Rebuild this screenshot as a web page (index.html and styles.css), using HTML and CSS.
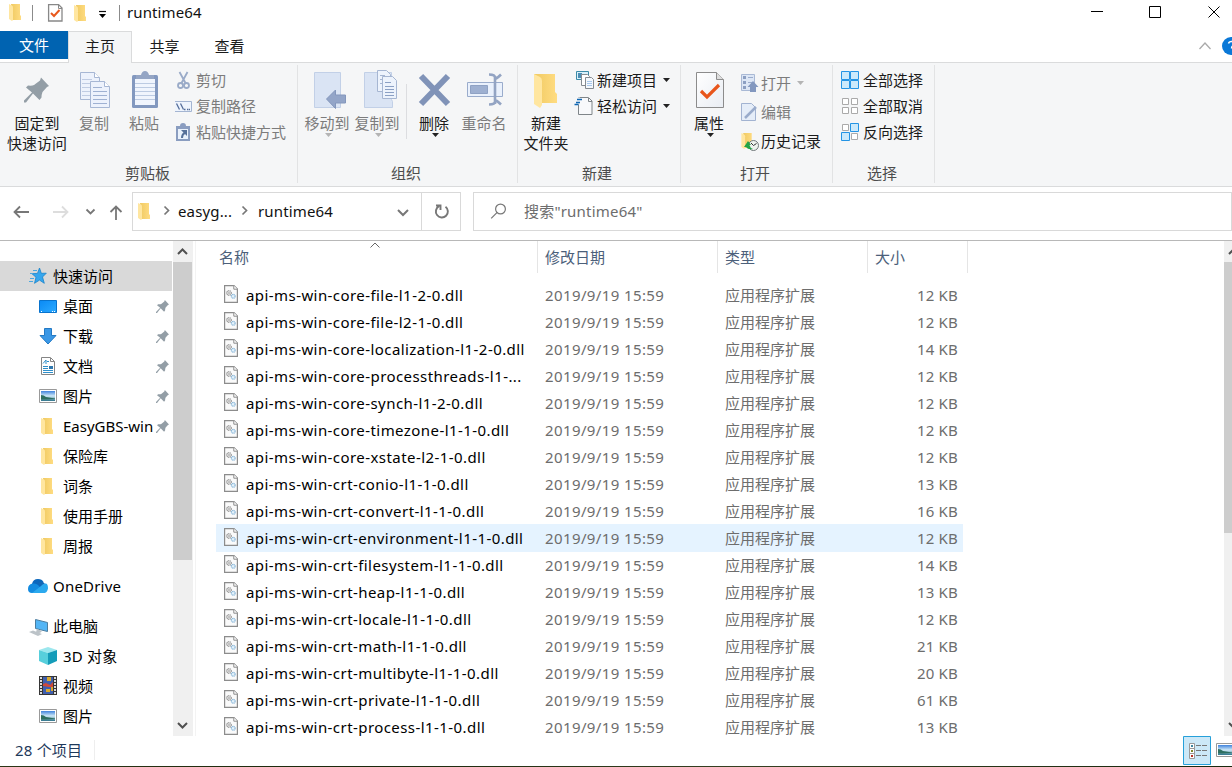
FILE: index.html
```html
<!DOCTYPE html>
<html lang="zh-CN">
<head>
<meta charset="utf-8">
<title>runtime64</title>
<link rel="stylesheet" href="styles.css">
</head>
<body>
<svg class="defs" width="0" height="0">
  <defs>
    <linearGradient id="gold" x1="0" x2="1"><stop offset="0" stop-color="#f0ca62"/><stop offset="1" stop-color="#ffdc82"/></linearGradient>
    <linearGradient id="pale" x1="0" x2="1" y2="1"><stop offset="0" stop-color="#fff"/><stop offset="1" stop-color="#e9edf3"/></linearGradient>
    <linearGradient id="sky" y2="1" x2="0"><stop offset="0" stop-color="#3f83dd"/><stop offset=".5" stop-color="#cfe9f7"/><stop offset="1" stop-color="#2b7289"/></linearGradient>
    <linearGradient id="desk" x2="1" y2="1"><stop offset="0" stop-color="#0a8af5"/><stop offset="1" stop-color="#2caaff"/></linearGradient>
  </defs>
  <symbol id="folder" viewBox="0 0 12 17"><path fill="url(#gold)" d="M2 0h9v11l1 1v4H3z"/><path fill="#ffe6a0" d="M0 0l3 1.500q1 .5 1 2V16l-1 1-3-2z"/></symbol>
  <symbol id="pin" viewBox="0 0 25 25"><path fill="#939ea6" d="M17 0L25 8.500 23 9.500 18.500 14.500Q17.500 17 17.500 20L15.500 22.500 9 16 2 25H0V23L8 15 2 10 4 8Q8 8.500 10 7.500L16 3z"/></symbol>
  <symbol id="dll" viewBox="0 0 14 18"><path fill="#fafafa" stroke="#8c8c8c" stroke-width="1.200" d="M.6.6h9.400l3.400 3.400v13.400H.6z"/><path fill="#fff" stroke="#8c8c8c" d="M9.800.6v3.600h3.600"/><circle cx="5" cy="8" r="2.300" fill="#e4e4e4" stroke="#999" stroke-width="1.200" stroke-dasharray="1 .5"/><circle cx="5" cy="8" r=".7" fill="#888"/><circle cx="9.200" cy="11.300" r="1.900" fill="#e4f2fb" stroke="#8ab6d8" stroke-width="1.200" stroke-dasharray="1 .4"/></symbol>
  <symbol id="photo" viewBox="0 0 18 14"><path fill="#fff" stroke="#999" d="M.5.5h17v13H.5z"/><path fill="url(#sky)" d="M2 2h14v10H2z"/><path fill="#2e6f61" d="M2 6q3 0 5 2l9 1.500V10l-9 .5H2z"/></symbol>
  <symbol id="caret" viewBox="0 0 7 4"><path d="M0 0h7L3.500 4z"/></symbol>
</svg>

<div class="window">
  <header class="titlebar">
    <svg class="quick" width="124" height="31" viewBox="0 0 124 31">
      <use href="#folder" x="9" y="4" width="12" height="17"/>
      <path stroke="#8b8b8b" d="M32.500 5v16M119.500 5v16"/>
      <path fill="#fff" stroke="#888" stroke-width="1.300" d="M48.600 4.600h10l3.400 3.400v13H48.600z"/><path fill="none" stroke="#888" d="M58.500 5v3.500H62"/><path fill="none" stroke="#e8581c" stroke-width="2" d="M51 13l3 3 5.500-6"/>
      <use href="#folder" x="74" y="5" width="12" height="17"/>
      <path stroke="#111" stroke-width="1.200" d="M99 11.500h7"/><path d="M99 14h7l-3.500 4z"/>
    </svg>
    <span class="caption">runtime64</span>
    <svg class="controls" width="140" height="31" viewBox="1092 0 140 31"><g fill="none" stroke="#000"><path d="M1091 11.500h12M1149.500 6.500h11v11h-11zM1208.500 6.500l11 11M1219.500 6.500l-11 11"/></g></svg>
  </header>

  <nav class="tabs">
    <span class="tab file">文件</span><span class="tab active">主页</span><span class="tab">共享</span><span class="tab">查看</span>
    <svg class="help" width="40" height="31" viewBox="1192 31 40 31"><path fill="none" stroke="#aaa" stroke-width="1.300" d="M1199.500 49l5.500-6 5.500 6"/><circle cx="1231" cy="46" r="9" fill="#0a78d7"/><path d="M1228.500 43.500q.5-2 3-2t3 2-2 2.500q-1 1-1 2.500" fill="none" stroke="#fff" stroke-width="1.500"/></svg>
  </nav>

  <section class="ribbon">
    <div class="group clipboard">
      <div class="tools">
        <div class="big pinbtn"><svg width="64" height="48" viewBox="5 65 64 48"><use href="#pin" x="24" y="77" width="25" height="26"/></svg>固定到<br>快速访问</div>
        <div class="big off"><svg width="50" height="48" viewBox="69 65 50 48"><g fill="#edf2fc" stroke="#a7b7d4"><path d="M80.500 72.500h14l5 5v22h-19z"/><path d="M94.500 72.500v5h5" fill="#fff"/><path stroke="#c0cce3" d="M82 79.500h10M82 83.500h8M82 87.500h8M82 91.500h8M82 95.500h8"/><path d="M90.500 81.500h14l5 5v21h-19z"/><path d="M104.500 81.500v5h5" fill="#fff"/><path stroke="#9fb1d2" d="M93 87.500h9M93 91.500h14M93 95.500h14M93 99.500h14M93 103.500h14"/></g></svg>复制</div>
        <div class="big off"><svg width="50" height="48" viewBox="119 65 50 48"><rect x="132" y="75" width="26" height="33" rx="1.500" fill="#8298bf"/><path fill="#f0f5fd" d="M135 79h20v26h-20z"/><path stroke="#bccbe2" d="M135 83.500h20M135 87.500h20M135 91.500h20M135 95.500h20M135 99.500h20"/><path fill="#94a5c4" d="M136 75h5q1-4 4-4t4 4h5v4h-18z"/></svg>粘贴</div>
        <div class="stack">
          <div class="small off"><svg width="21" height="20" viewBox="175 70 21 20"><g fill="none" stroke="#9aabc8" stroke-width="1.800"><path d="M179.500 72l6 11M187.500 72l-6 11"/><circle cx="180.500" cy="85.500" r="2.500"/><circle cx="186.500" cy="85.500" r="2.500"/></g></svg>剪切</div>
          <div class="small off"><svg width="21" height="20" viewBox="175 96 21 20"><path fill="#eef4fd" stroke="#a4b5d2" d="M174.500 101.500h17v10h-17z"/><path stroke="#536c99" stroke-width="1.300" d="M176.500 103.500l3 6M180.500 103.500l3 6M184 109.500h1.500M187 109.500h1.500M189 109.500h1"/></svg>复制路径</div>
          <div class="small off"><svg width="21" height="20" viewBox="175 122 21 20"><path fill="#8a9dc0" d="M176 126h4q0-3 3-3t3 3h4v15h-14z"/><path fill="#eaf2fc" d="M178 129h10v10h-10z"/><path fill="#577199" d="M181 130h6v6l-2-2q-2 1-2 4h-2q0-4 2.500-5.500z"/></svg>粘贴快捷方式</div>
        </div>
      </div>
      <div class="group-name">剪贴板</div>
    </div>

    <div class="group organize">
      <div class="tools">
        <div class="big off"><svg width="50" height="48" viewBox="302 65 50 48"><path fill="#dae4f4" stroke="#c2d0e7" d="M314.500 72.500h26v35h-26z"/><path fill="#93a5c8" stroke="#8497bc" d="M326.500 99l9-9v5h10v8h-10v5.500z"/></svg>移动到<svg class="arrow"><use href="#caret"/></svg></div>
        <div class="big off"><svg width="50" height="48" viewBox="352 65 50 48"><path fill="#dae4f4" stroke="#c2d0e7" d="M364.500 72.500h27v27l1 2v6h-28z"/><g fill="#edf3fc" stroke="#a6b6d2"><path d="M377.500 70.500h9l4 4v17h-13z"/><path d="M380 75.500h5M380 79.500h5M380 83.500h5"/><path d="M382.500 76.500h10l4 4v18h-14z"/><path stroke="#8ba0c4" d="M385 82.500h6M385 86.500h9M385 89.500h9M385 92.500h9M385 95.500h9"/></g></svg>复制到<svg class="arrow"><use href="#caret"/></svg></div>
        <i class="divider"></i>
        <div class="big"><svg width="50" height="48" viewBox="409 65 50 48"><path stroke="#8093b8" stroke-width="6" d="M421 76l27 28M448 76l-27 28"/></svg>删除<svg class="arrow"><use href="#caret"/></svg></div>
        <div class="big off"><svg width="50" height="48" viewBox="459 65 50 48"><path fill="#eaf1fc" stroke="#9aaccc" d="M467.500 82.500h35v14h-35z"/><path fill="#9eb0d1" stroke="#8fa2c4" d="M470.500 85.500h17v8h-17z"/><path fill="none" stroke="#93a4c3" stroke-width="2.600" d="M489 74.500q6 0 6 3t6-3M495 76v28M489 104.500q6 0 6-3t6 3"/></svg>重命名</div>
      </div>
      <div class="group-name">组织</div>
    </div>

    <div class="group new">
      <div class="tools">
        <div class="big"><svg width="50" height="48" viewBox="521 65 50 48"><path fill="url(#gold)" d="M534 74h21v18l2 2v9h-18z"/><path fill="#ffe6a0" d="M534 74l6 3q2 1 2 4v24l-2 3-6-4z"/></svg>新建<br>文件夹</div>
        <div class="stack">
          <div class="small"><svg width="21" height="20" viewBox="576 70 21 20"><path fill="#d9f0fa" stroke="#3c8ba8" d="M576.500 71.500h12v8h-12z"/><path fill="#4b8db5" d="M578 73h4v5h-4z"/><path fill="#fff" stroke="#858b91" d="M581.500 74.500h6l2 2v9h-8z"/><path fill="#f4f8fd" stroke="#858b91" d="M585.500 77.500h6l2 2v9h-8z"/><path stroke="#a8c8ec" d="M587 81.500h5M587 83.500h5M587 85.500h5"/></svg>新建项目<svg class="arrow side"><use href="#caret"/></svg></div>
          <div class="small"><svg class="bleed" width="21" height="20" viewBox="576 96 21 20"><path fill="#f8f9fb" stroke="#7f8589" d="M578.500 97.500h10l3.500 3.500v13.500h-13.500z"/><path fill="none" stroke="#7f8589" d="M588.500 98v3.500h3.500"/><path stroke="#f5f6f7" stroke-width="7" d="M576 101h4"/><path stroke="#1268b3" stroke-width="1.300" d="M577 99.500h5M576 102.500h4M574.500 104.500h4"/></svg>轻松访问<svg class="arrow side"><use href="#caret"/></svg></div>
        </div>
      </div>
      <div class="group-name">新建</div>
    </div>

    <div class="group open">
      <div class="tools">
        <div class="big"><svg width="50" height="48" viewBox="684 65 50 48"><path fill="url(#pale)" stroke="#8c8c8c" d="M696.500 72.500h20l7 7v28h-27z"/><path fill="#ddd" stroke="#8c8c8c" d="M716.500 72.500v7h7"/><path fill="none" stroke="#e8561c" stroke-width="3.200" d="M701 91l6 6 12-12"/></svg>属性<svg class="arrow"><use href="#caret"/></svg></div>
        <div class="stack loose">
          <div class="small off"><svg width="20" height="20" viewBox="741 73 20 20"><path fill="#dce6f5" stroke="#a9b9d5" d="M741.500 74.500h13v16h-13z"/><path fill="#8c9fc2" d="M743 76h3v3h-3zm0 5h3v3h-3zm0 5h3v3h-3z"/><path stroke="#9baccc" d="M748 77.500h5M748 82.500h4"/><path fill="#8398bf" d="M753 81l5.500 6H756v5h-6v-5h-2.500z"/></svg>打开<svg class="arrow side"><use href="#caret"/></svg></div>
          <div class="small off"><svg width="20" height="20" viewBox="741 102 20 20"><path fill="#e5edf8" stroke="#a2b3d1" d="M741.500 103.500h10l4 4v13h-14z"/><path stroke="#9aaccb" stroke-width="2.500" d="M745 118l11-11"/></svg>编辑</div>
          <div class="small"><svg width="20" height="20" viewBox="741 131 20 20"><use href="#folder" x="741" y="133" width="12" height="16"/><circle cx="753.500" cy="145.500" r="5" fill="#eef2ee" stroke="#70787a"/><path fill="#22a447" d="M744 147l4-6 3 4h-1.500q.5 3 3.500 4-5 1-7-2z"/><path fill="none" stroke="#333" d="M751 143l2.500 2.500 3-2"/></svg>历史记录</div>
        </div>
      </div>
      <div class="group-name">打开</div>
    </div>

    <div class="group select">
      <div class="tools"><div class="stack">
        <div class="small"><svg width="22" height="20" viewBox="841 70 22 20"><path fill="#cbe9fb" stroke="#2494e5" d="M841.500 71.500h8v8h-8zm9 0h8v8h-8zm-9 9h8v8h-8zm9 0h8v8h-8z"/></svg>全部选择</div>
        <div class="small"><svg width="22" height="20" viewBox="841 96 22 20"><path fill="#fff" stroke="#aaa" d="M842.500 98.500h6v6h-6zm9 0h6v6h-6zm-9 9h6v6h-6zm9 0h6v6h-6z"/></svg>全部取消</div>
        <div class="small"><svg width="22" height="20" viewBox="841 122 22 20"><path fill="#fff" stroke="#aaa" d="M842.500 124.500h6v6h-6zm9 9h6v6h-6z"/><path fill="#cbe9fb" stroke="#2494e5" d="M850.500 123.500h8v8h-8zm-9 9h8v8h-8z"/></svg>反向选择</div>
      </div></div>
      <div class="group-name">选择</div>
    </div>
  </section>

  <section class="address">
    <svg class="history" width="132" height="53" viewBox="0 187 132 53"><g fill="none" stroke="#777" stroke-width="1.800"><path d="M14.500 212H29M20 206.500l-5.500 5.500 5.500 5.500"/><path stroke="#ddd" d="M53 212h14.500M62 206.500l5.500 5.500-5.500 5.500"/><path d="M86.500 209.500l4 4 4-4"/><path d="M116 220v-13M110.500 212l5.500-5.500 5.500 5.500"/></g></svg>
    <div class="path">
      <svg width="45" height="37" viewBox="133 193 45 37"><use href="#folder" x="138" y="203" width="12" height="17"/><path fill="none" stroke="#777" stroke-width="1.700" d="M164.500 206.500l4 4-4 4"/></svg>
      <span class="crumb">easyg...</span>
      <svg width="20" height="37" viewBox="238 193 20 37"><path fill="none" stroke="#777" stroke-width="1.700" d="M242.500 206.500l4 4-4 4"/></svg>
      <span class="crumb last">runtime64</span>
      <svg width="30" height="37" viewBox="391 193 30 37"><path fill="none" stroke="#777" stroke-width="2" d="M398 210l5 5 5-5"/></svg>
    </div>
    <div class="refresh"><svg width="38" height="37" viewBox="422 193 38 37"><path fill="none" stroke="#777" stroke-width="1.900" d="M445.500 206.700a6 6 0 1 1-6.500-.5M436 205.500h4.500v4.500"/></svg></div>
    <div class="search"><svg width="50" height="37" viewBox="474 193 50 37"><g fill="none" stroke="#777" stroke-width="1.200"><circle cx="500.500" cy="209" r="4.900"/><path d="M497.200 212.300l-6 6"/></g></svg><span>搜索"runtime64"</span></div>
  </section>

  <main class="content">
    <aside class="tree">
      <div class="node root current"><svg width="25" height="30" viewBox="29 261 25 30"><path fill="#35a6ee" stroke="#1683ca" stroke-width=".8" d="M40.500 268l1.800 5.300 5-.1-3.800 3.800 1.800 6.300-4.800-3.200-5 3.200 1.500-6-4-3.600 5.500-.3z"/><path stroke="#4aa7df" d="M34 270.500h4M31 273.500h3M31 278.500h4M30 281.500h4"/></svg>快速访问</div>
      <div class="node"><svg width="25" height="30" viewBox="38 291 25 30"><path fill="url(#desk)" stroke="#0873cd" d="M39.500 300.500h17v12h-17z"/><path stroke="#fff" d="M41 311.500h1M52 311.500h1M54 311.500h1"/></svg><span>桌面</span><svg class="pin"><use href="#pin"/></svg></div>
      <div class="node"><svg width="25" height="30" viewBox="38 321 25 30"><path fill="#3b98e6" stroke="#2379c4" d="M44.500 328.500h7v7h4.500l-8 8.500-8-8.500h4.500z"/></svg><span>下载</span><svg class="pin"><use href="#pin"/></svg></div>
      <div class="node"><svg width="25" height="30" viewBox="38 351 25 30"><path fill="#fff" stroke="#858585" d="M41.500 357.500h9l4 4v13h-13z"/><path fill="none" stroke="#858585" d="M50.500 358v3.500h4"/><path fill="none" stroke="#2f8fca" d="M43 363.500l3-3.500v4M47 361.500h2M43 366.500h5M43 368.500h5M43 370.500h10M43 372.500h10"/><path fill="#2f78af" d="M49 366h4v3h-4z"/></svg><span>文档</span><svg class="pin"><use href="#pin"/></svg></div>
      <div class="node"><svg width="25" height="30" viewBox="38 381 25 30"><use href="#photo" x="39" y="389" width="18" height="14"/></svg><span>图片</span><svg class="pin"><use href="#pin"/></svg></div>
      <div class="node"><svg width="25" height="30" viewBox="38 411 25 30"><use href="#folder" x="41" y="418" width="12" height="17"/></svg><span class="latin">EasyGBS-win</span><svg class="pin"><use href="#pin"/></svg></div>
      <div class="node"><svg width="25" height="30" viewBox="38 411 25 30"><use href="#folder" x="41" y="418" width="12" height="17"/></svg><span>保险库</span></div>
      <div class="node"><svg width="25" height="30" viewBox="38 411 25 30"><use href="#folder" x="41" y="418" width="12" height="17"/></svg><span>词条</span></div>
      <div class="node"><svg width="25" height="30" viewBox="38 411 25 30"><use href="#folder" x="41" y="418" width="12" height="17"/></svg><span>使用手册</span></div>
      <div class="node"><svg width="25" height="30" viewBox="38 411 25 30"><use href="#folder" x="41" y="418" width="12" height="17"/></svg><span>周报</span></div>
      <div class="node root spaced"><svg width="25" height="30" viewBox="28 571 25 30"><path fill="#0b67bd" d="M32 584q1-5 6-5 4 0 5.500 3l-3 6z"/><path fill="#138be0" d="M32 593q-4 0-4-4 0-5 5-5.500 3-.5 5 1.500l7 8z"/><path fill="#1467b5" d="M38 583q4-3 7 1l-2 4z"/><path fill="#2ba9ee" d="M32 593l9-7q2-3 5-2.500 2 .5 2 5-1 4.500-4 4.500z"/></svg><span class="wide">OneDrive</span></div>
      <div class="node root spaced"><svg width="25" height="30" viewBox="28 611 25 30"><path fill="#53b5f5" stroke="#4d7d9e" d="M35.500 619.500l12 3v9l-12-3z"/><path fill="#bcc3c8" d="M37 629l5 2-2 2-4-1zM29 632l4-1.500 9 3.500-4 2z"/></svg><span>此电脑</span></div>
      <div class="node"><svg width="25" height="30" viewBox="38 641 25 30"><path fill="#9ce7ee" d="M39 650l9-3 9 3-9 3z"/><path fill="#57cfdc" d="M39 650l9 3v12l-9-4z"/><path fill="#149cb9" d="M57 650l-9 3v12l9-4z"/></svg><span class="wide">3D 对象</span></div>
      <div class="node"><svg width="25" height="30" viewBox="38 671 25 30"><path fill="#363636" d="M39 676h18v19H39z"/><path stroke="#ddd" stroke-width="2" stroke-dasharray="2 1" d="M41 677v17M55 677v17"/><path fill="#3f5fae" d="M43 677h10v17H43z"/><path fill="#cf4938" d="M43 684l3-1 4 2 3-3v5l-4 0-6-1z"/><path fill="#d9a92f" d="M47 677h4v4h-4zm-1 12h4v3h-4zm5-2h2v4h-2z"/></svg><span>视频</span></div>
      <div class="node"><svg width="25" height="30" viewBox="38 701 25 30"><use href="#photo" x="39" y="709" width="18" height="14"/></svg><span>图片</span></div>
    </aside>
    <div class="scroll tree-scroll"><svg width="20" height="21" viewBox="0 0 20 21"><path d="M5 13l4.500-4.500L14 13"/></svg><i></i><svg width="20" height="21" viewBox="0 0 20 21"><path d="M5 8l4.500 4.500L14 8"/></svg></div>

    <section class="files">
      <div class="columns"><span class="c-name">名称<svg class="sort" width="10" height="6" viewBox="0 0 10 6"><path fill="none" stroke="#666" d="M.5 5.500L5 1l4.500 4.500"/></svg></span><span class="c-date">修改日期</span><span class="c-type">类型</span><span class="c-size">大小</span></div>
      <div class="rows">
        <div class="row"><svg class="dll"><use href="#dll"/></svg><b>api-ms-win-core-file-l1-2-0.dll</b><span class="date">2019/9/19 15:59</span><span class="type">应用程序扩展</span><span class="size">12 KB</span></div>
        <div class="row"><svg class="dll"><use href="#dll"/></svg><b>api-ms-win-core-file-l2-1-0.dll</b><span class="date">2019/9/19 15:59</span><span class="type">应用程序扩展</span><span class="size">12 KB</span></div>
        <div class="row"><svg class="dll"><use href="#dll"/></svg><b>api-ms-win-core-localization-l1-2-0.dll</b><span class="date">2019/9/19 15:59</span><span class="type">应用程序扩展</span><span class="size">14 KB</span></div>
        <div class="row"><svg class="dll"><use href="#dll"/></svg><b>api-ms-win-core-processthreads-l1-...</b><span class="date">2019/9/19 15:59</span><span class="type">应用程序扩展</span><span class="size">12 KB</span></div>
        <div class="row"><svg class="dll"><use href="#dll"/></svg><b>api-ms-win-core-synch-l1-2-0.dll</b><span class="date">2019/9/19 15:59</span><span class="type">应用程序扩展</span><span class="size">12 KB</span></div>
        <div class="row"><svg class="dll"><use href="#dll"/></svg><b>api-ms-win-core-timezone-l1-1-0.dll</b><span class="date">2019/9/19 15:59</span><span class="type">应用程序扩展</span><span class="size">12 KB</span></div>
        <div class="row"><svg class="dll"><use href="#dll"/></svg><b>api-ms-win-core-xstate-l2-1-0.dll</b><span class="date">2019/9/19 15:59</span><span class="type">应用程序扩展</span><span class="size">12 KB</span></div>
        <div class="row"><svg class="dll"><use href="#dll"/></svg><b>api-ms-win-crt-conio-l1-1-0.dll</b><span class="date">2019/9/19 15:59</span><span class="type">应用程序扩展</span><span class="size">13 KB</span></div>
        <div class="row"><svg class="dll"><use href="#dll"/></svg><b>api-ms-win-crt-convert-l1-1-0.dll</b><span class="date">2019/9/19 15:59</span><span class="type">应用程序扩展</span><span class="size">16 KB</span></div>
        <div class="row hover"><svg class="dll"><use href="#dll"/></svg><b>api-ms-win-crt-environment-l1-1-0.dll</b><span class="date">2019/9/19 15:59</span><span class="type">应用程序扩展</span><span class="size">12 KB</span></div>
        <div class="row"><svg class="dll"><use href="#dll"/></svg><b>api-ms-win-crt-filesystem-l1-1-0.dll</b><span class="date">2019/9/19 15:59</span><span class="type">应用程序扩展</span><span class="size">14 KB</span></div>
        <div class="row"><svg class="dll"><use href="#dll"/></svg><b>api-ms-win-crt-heap-l1-1-0.dll</b><span class="date">2019/9/19 15:59</span><span class="type">应用程序扩展</span><span class="size">13 KB</span></div>
        <div class="row"><svg class="dll"><use href="#dll"/></svg><b>api-ms-win-crt-locale-l1-1-0.dll</b><span class="date">2019/9/19 15:59</span><span class="type">应用程序扩展</span><span class="size">12 KB</span></div>
        <div class="row"><svg class="dll"><use href="#dll"/></svg><b>api-ms-win-crt-math-l1-1-0.dll</b><span class="date">2019/9/19 15:59</span><span class="type">应用程序扩展</span><span class="size">21 KB</span></div>
        <div class="row"><svg class="dll"><use href="#dll"/></svg><b>api-ms-win-crt-multibyte-l1-1-0.dll</b><span class="date">2019/9/19 15:59</span><span class="type">应用程序扩展</span><span class="size">20 KB</span></div>
        <div class="row"><svg class="dll"><use href="#dll"/></svg><b>api-ms-win-crt-private-l1-1-0.dll</b><span class="date">2019/9/19 15:59</span><span class="type">应用程序扩展</span><span class="size">61 KB</span></div>
        <div class="row"><svg class="dll"><use href="#dll"/></svg><b>api-ms-win-crt-process-l1-1-0.dll</b><span class="date">2019/9/19 15:59</span><span class="type">应用程序扩展</span><span class="size">13 KB</span></div>
      </div>
    </section>
    <div class="scroll file-scroll"><svg width="20" height="21" viewBox="0 0 20 21"><path d="M5 13l4.500-4.500L14 13"/></svg><i></i><svg width="20" height="21" viewBox="0 0 20 21"><path d="M5 8l4.500 4.500L14 8"/></svg></div>
  </main>

  <footer class="status">
    <span class="count">28 个项目</span>
    <svg width="49" height="30" viewBox="1183 736 49 30"><path fill="#cce8f7" stroke="#26a0da" d="M1183.500 736.500h27v28h-27z"/><path fill="#fff" stroke="#999" d="M1189.500 743.500h5v5h-5zm0 5h5v5h-5zm0 5h5v5h-5z"/><path stroke="#777" d="M1196 745.500h5M1202 745.500h5M1196 750.500h5M1202 750.500h5M1196 755.500h5M1202 755.500h5"/><path fill="#3e86a1" d="M1191 745h2v2h-2z"/><path fill="#7f8b2c" d="M1191 750h2v2h-2z"/><path fill="#bb3125" d="M1191 755h2v2h-2z"/><use href="#photo" x="1216" y="743" width="18" height="14"/></svg>
  </footer>
  <div class="wallpaper"></div>
</div>
</body>
</html>
```
FILE: styles.css
```css
* { box-sizing: border-box; }
html, body { margin: 0; overflow: hidden; }
body { font: 15px/20px "Noto Sans", "Noto Sans CJK SC", sans-serif; color: #1b1b1b; background: #fff; }
svg { display: block; flex: none; }
.defs { position: absolute; }
.bleed { overflow: visible; }
.window { width: 1232px; height: 767px; display: flex; flex-direction: column; overflow: hidden; }

.titlebar { height: 31px; display: flex; flex: none; }
.caption { padding: 2px 0 0 3px; letter-spacing: .1px; color: #111; flex: 1; }
.controls { overflow: visible; }

.tabs { height: 32px; flex: none; display: flex; border-bottom: 1px solid #dadbdc; }
.tab { width: 65px; height: 31px; line-height: 30px; text-align: center; }
.tab.file { width: 68px; height: 28px; line-height: 28px; background: #0063b1; color: #fff; }
.tab.active { width: 64px; height: 32px; background: #f5f6f7; border: 1px solid #dadbdc; border-bottom: 0; line-height: 28px; }
.help { margin-left: auto; }

.ribbon { height: 124px; flex: none; display: flex; background: #f5f6f7; border-bottom: 1px solid #dadbdc; padding-top: 2px; }
.group { height: 118px; border-right: 1px solid #e2e3e4; display: flex; flex-direction: column; }
.tools { height: 98px; display: flex; }
.clipboard { width: 298px; padding-left: 5px; }
.organize { width: 220px; padding-left: 4px; }
.new { width: 163px; padding-left: 3px; }
.open { width: 152px; padding-left: 3px; }
.select { width: 102px; padding-left: 8px; }
.group-name { text-align: center; color: #4c4c4c; line-height: 20px; }
.clipboard .group-name { padding-right: 7px; }
.organize .group-name { padding-right: 7px; }
.new .group-name { padding-right: 7px; }
.open .group-name { padding-right: 6px; }
.select .group-name { padding-right: 11px; }
.big { width: 50px; text-align: center; white-space: nowrap; }
.pinbtn { width: 64px; }
.off { color: #7c7c7c; }
.arrow { width: 7px; height: 4px; margin: 0 auto 0 23px; fill: #222; }
.off .arrow { fill: #b4b4b4; }
.arrow.side { margin: 0 0 0 6px; }
.divider { width: 1px; height: 55px; margin: 19px 2px 0 4px; background: #dcdde0; }
.stack { display: flex; flex-direction: column; gap: 6px; padding: 5px 0 0 5px; }
.clipboard .stack { padding-left: 6px; }
.stack.loose { gap: 9px; padding: 8px 0 0 7px; }
.select .stack { padding-left: 0; }
.small { height: 20px; display: flex; align-items: center; white-space: nowrap; }

.address { height: 54px; flex: none; display: flex; align-items: flex-start; border-bottom: 1px solid #b8b8b8; }
.path, .refresh, .search { margin-top: 5px; height: 39px; border: 1px solid #d9d9d9; display: flex; line-height: 37px; }
.path { width: 290px; }
.crumb { width: 60px; color: #111; letter-spacing: .15px; }
.crumb.last { flex: 1; }
.refresh { width: 40px; margin-left: -1px; }
.search { flex: 1; margin-left: 12px; color: #6d6d6d; letter-spacing: .2px; }

.content { height: 495px; flex: none; display: flex; overflow: hidden; }
.tree { width: 173px; padding-top: 20px; color: #000; overflow: hidden; }
.node { width: 172px; height: 30px; padding-left: 38px; display: flex; line-height: 30px; white-space: nowrap; }
.node.root { padding-left: 28px; }
.node.current { background: #d9d9d9; }
.spaced { margin-top: 10px; }
.latin { width: 90px; overflow: hidden; }
.wide { letter-spacing: .2px; }
.node .pin { width: 13px; height: 13px; margin: 9px 3px 0 auto; }
.scroll { background: #f0f0f0; display: flex; flex-direction: column; flex: none; overflow: hidden; }
.scroll path { fill: none; stroke: #505050; stroke-width: 2; }
.scroll i { background: #cdcdcd; display: block; }
.scroll svg:last-child { margin-top: auto; }
.tree-scroll { width: 20px; }
.tree-scroll i { height: 298px; width: 19px; }
.files { flex: 1; min-width: 0; margin-left: 2px; border-left: 1px solid #f3f3f3; }
.columns { height: 32px; display: flex; line-height: 32px; color: #4c607a; }
.columns span { border-right: 1px solid #e5e5e5; padding-left: 7px; }
.columns .c-name { width: 342px; padding-left: 23px; display: flex; }
.sort { margin: 1px 0 0 121px; }
.c-date { width: 180px; }
.c-type { width: 150px; }
.c-size { width: 100px; }
.rows { padding: 8px 0 0 20px; }
.row { height: 28px; margin-bottom: -1px; width: 747px; padding-left: 8px; display: flex; line-height: 28px; white-space: nowrap; color: #6d6d6d; }
.row.hover { background: #e5f3ff; }
.dll { width: 14px; height: 18px; margin-top: 4px; }
.row b { font-weight: 400; width: 299px; padding-left: 8px; color: #000; letter-spacing: .43px; }
.date { width: 180px; padding-left: 8px; letter-spacing: .39px; }
.type { width: 150px; padding-left: 8px; }
.size { width: 91px; text-align: right; letter-spacing: .2px; }
.file-scroll { width: 8px; }
.file-scroll i { height: 271px; }

.status { height: 30px; flex: none; display: flex; justify-content: space-between; color: #1e395b; }
.count { height: 20px; margin-top: 4px; padding-left: 15px; width: 95px; border-right: 1px solid #eee; white-space: nowrap; letter-spacing: .2px; }
.wallpaper { height: 1px; background: linear-gradient(90deg, #2c3516, #19280c 30%, #364022 60%, #17280d); }
```
